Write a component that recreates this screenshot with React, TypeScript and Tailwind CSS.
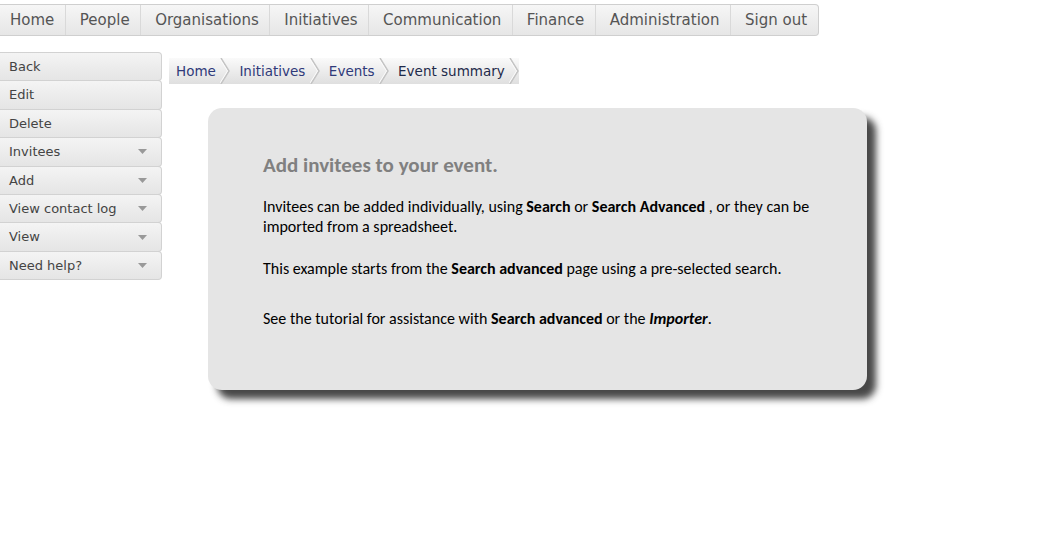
import type { FC } from 'react'

const navItems = ['Home', 'People', 'Organisations', 'Initiatives', 'Communication', 'Finance', 'Administration', 'Sign out']

const sideItems: { label: string; menu?: boolean }[] = [
  { label: 'Back' },
  { label: 'Edit' },
  { label: 'Delete' },
  { label: 'Invitees', menu: true },
  { label: 'Add', menu: true },
  { label: 'View contact log', menu: true },
  { label: 'View', menu: true },
  { label: 'Need help?', menu: true },
]

const crumbs = ['Home', 'Initiatives', 'Events', 'Event summary']

const Chevron: FC = () => (
  <svg width="10" height="26" viewBox="0 0 10 26" className="shrink-0">
    <polyline points="1,0 9,13 1,26" fill="none" stroke="#c4c4c4" strokeWidth="1.5" />
    <polyline points="0,1 7.5,13 0,25" fill="none" stroke="#fbfbfb" strokeWidth="1" />
  </svg>
)

const App: FC = () => {
  return (
    <div className="w-[1062px] h-[556px] bg-white overflow-hidden" style={{ fontFamily: 'Verdana, "DejaVu Sans", sans-serif' }}>
      {/* top menu */}
      <div className="pt-1 flex">
        <div className="flex border border-l-0 border-[#cfcfcf] rounded-r-[4px] bg-gradient-to-b from-[#f6f6f6] to-[#e6e6e6] h-8">
          {navItems.map((n, i) => (
            <div
              key={n}
              className={`${i === 0 ? 'pl-[10px]' : 'pl-[14px] border-l border-[#d9d9d9]'} pr-[10.5px] pt-px flex items-center text-[15px] text-[#555]`}
            >
              {n}
            </div>
          ))}
        </div>
      </div>

      <div className="flex mt-[15px]">
        {/* side menu */}
        <div className="w-[162px] shrink-0 flex flex-col pt-px">
          {sideItems.map((s) => (
            <div
              key={s.label}
              className="h-[29.4px] flex items-center justify-between pl-[9px] pr-[14px] text-[13px] text-[#444] border border-l-0 border-[#d2d2d2] rounded-r-[4px] bg-gradient-to-b from-[#f4f4f4] to-[#e5e5e5] -mb-px"
            >
              <span>{s.label}</span>
              {s.menu && (
                <svg width="9" height="5" viewBox="0 0 9 5">
                  <polygon points="0,0 9,0 4.5,5" fill="#999" />
                </svg>
              )}
            </div>
          ))}
        </div>

        <div className="flex-1 flex flex-col pl-[7px]">
          {/* breadcrumb */}
          <div className="flex mt-[7px]">
            <div className="flex items-center h-[26px] bg-gradient-to-b from-[#fafafa] to-[#dfdfdf] text-[13.5px]">
              {crumbs.map((c, i) => (
                <div key={c} className="flex items-center h-full">
                  <span className={`${i === 0 ? 'pl-[7px]' : 'pl-[9px]'} pr-[4.5px] ${i === crumbs.length - 1 ? 'text-[#1e2a4a]' : 'text-[#2f3a7a]'}`}>{c}</span>
                  <Chevron />
                </div>
              ))}
            </div>
          </div>

          {/* info card */}
          <div
            className="mt-[24px] ml-[39px] w-[659px] h-[282px] bg-[#e5e5e5] rounded-[14px] shadow-[9px_9px_7px_rgba(40,40,40,0.85)] pl-[55px] pr-[40px] pt-[45px] text-[16px] text-black leading-[20px]"
            style={{ fontFamily: 'Carlito, Calibri, Lato, "Open Sans", sans-serif' }}
          >
            <h2 className="text-[21px] font-bold text-[#808080] leading-[24px]">Add invitees to your event.</h2>
            <p className="mt-[20px]">
              Invitees can be added individually, using <b>Search</b> or <b>Search Advanced</b> , or they can be imported from a spreadsheet.
            </p>
            <p className="mt-[22px]">
              This example starts from the <b>Search advanced</b> page using a pre-selected search.
            </p>
            <p className="mt-[30px]">
              See the tutorial for assistance with <b>Search advanced</b> or the <b><i>Importer</i></b>.
            </p>
          </div>
        </div>
      </div>
    </div>
  )
}

export default App
